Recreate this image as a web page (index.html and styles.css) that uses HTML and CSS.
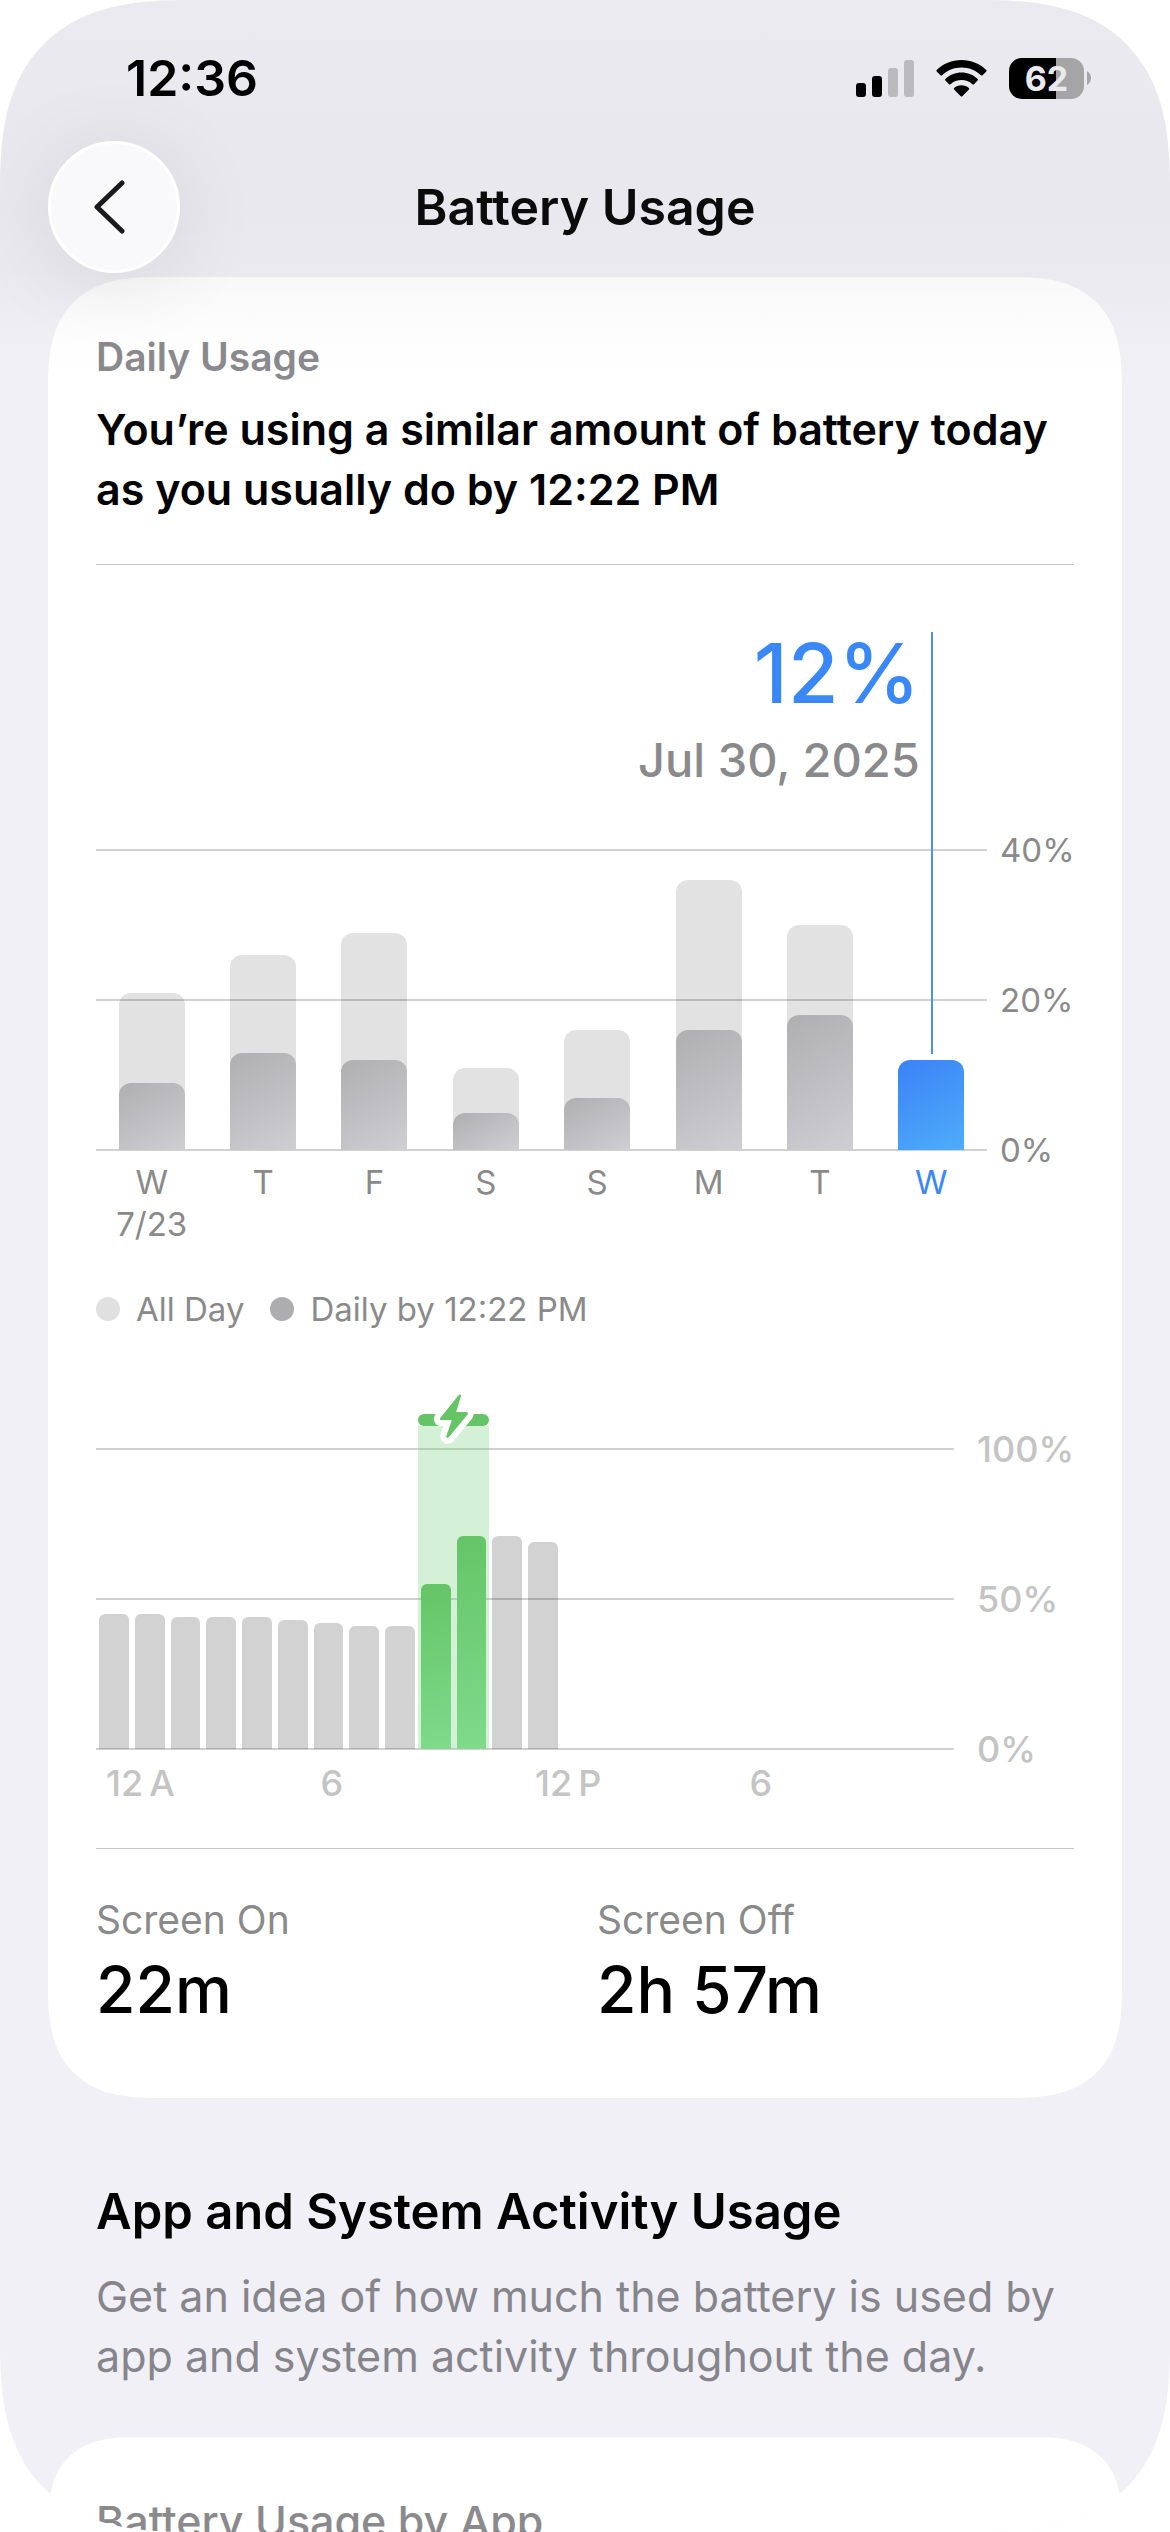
FILE: index.html
```html
<!DOCTYPE html>
<html lang="en">
<head>
<meta charset="utf-8">
<meta name="viewport" content="width=device-width, initial-scale=1">
<title>Battery Usage</title>
<link rel="stylesheet" href="styles.css">
</head>
<body>
<div class="screen">
  <div class="top">
    <div class="status-bar">
      <time class="clock">12:36</time>
      <div class="status-icons">
        <svg class="icon" width="58" height="37" viewBox="0 0 58 37" aria-hidden="true">
          <rect x="0" y="23" width="10" height="14" rx="3"/>
          <rect x="16" y="16" width="10" height="21" rx="3"/>
          <rect class="dim" x="32" y="8" width="10" height="29" rx="3"/>
          <rect class="dim" x="48" y="0" width="10" height="37" rx="3"/>
        </svg>
        <svg class="icon" width="51" height="37" viewBox="0 0 51 37" aria-hidden="true">
          <path d="M25.500 0C35 0 44 3.800 50.300 10Q51 10.800 50.300 11.600L46.600 15.200Q45.800 16 45 15.200C39.700 10.200 32.800 7.500 25.500 7.500S11.300 10.200 6 15.200Q5.200 16 4.400 15.200L.7 11.600Q0 10.800.7 10C7 3.800 16 0 25.500 0Z"/>
          <path d="M25.500 12.600C31.700 12.600 37.400 15 41.600 19Q42.400 19.800 41.600 20.600L38 24.200Q37.200 25 36.400 24.200C33.400 21.600 29.600 20.100 25.500 20.100S17.600 21.600 14.600 24.200Q13.800 25 13 24.200L9.400 20.600Q8.600 19.800 9.400 19C13.600 15 19.300 12.600 25.500 12.600Z"/>
          <path d="M25.500 25.200C28.300 25.200 30.900 26.200 32.900 27.900Q33.700 28.600 32.900 29.400L26.300 36.200Q25.500 37 24.700 36.200L18.100 29.400Q17.300 28.600 18.100 27.900C20.100 26.200 22.700 25.200 25.500 25.200Z"/>
        </svg>
        <div class="battery">
          <span class="battery-level">62</span>
          <svg width="4" height="14" viewBox="0 0 4 14" aria-hidden="true"><path d="M0 0Q4 2.500 4 7T0 14Z" fill="#a5a5a7"/></svg>
        </div>
      </div>
    </div>
    <header class="nav-bar">
      <button class="back" type="button" aria-label="Back">
        <svg width="31" height="54" viewBox="0 0 31 54" aria-hidden="true"><path d="M28 3L3 27L28 51" fill="none" stroke="#1a1a1c" stroke-width="5" stroke-linecap="round" stroke-linejoin="round"/></svg>
      </button>
      <h1 class="title">Battery Usage</h1>
    </header>
  </div>

  <main class="content">
    <section class="card">
      <h2 class="card-label">Daily Usage</h2>
      <p class="headline">You’re using a similar amount of battery today as you usually do by 12:22 PM</p>
      <hr class="rule rule-top">

      <div class="callout">
        <strong class="callout-value">12%</strong>
        <span class="callout-date">Jul 30, 2025</span>
      </div>
      <div class="chart daily">
        <div class="plot">
          <div class="gridlines"><i></i><i></i><i></i></div>
          <div class="days">
            <div class="day"><i class="all" style="height:52.5%"></i><i class="part" style="height:22.5%"></i></div>
            <div class="day"><i class="all" style="height:65%"></i><i class="part" style="height:32.5%"></i></div>
            <div class="day"><i class="all" style="height:72.5%"></i><i class="part" style="height:30%"></i></div>
            <div class="day"><i class="all" style="height:27.5%"></i><i class="part" style="height:12.5%"></i></div>
            <div class="day"><i class="all" style="height:40%"></i><i class="part" style="height:17.5%"></i></div>
            <div class="day"><i class="all" style="height:90%"></i><i class="part" style="height:40%"></i></div>
            <div class="day"><i class="all" style="height:75%"></i><i class="part" style="height:45%"></i></div>
            <div class="day selected"><i class="part" style="height:30%"></i></div>
          </div>
        </div>
        <div class="y-axis"><span>40%</span><span>20%</span><span>0%</span></div>
        <div class="day-names">
          <span>W<br>7/23</span><span>T</span><span>F</span><span>S</span><span>S</span><span>M</span><span>T</span><span class="current">W</span>
        </div>
      </div>

      <ul class="legend">
        <li><i class="dot"></i>All Day</li>
        <li><i class="dot dot-dark"></i>Daily by 12:22 PM</li>
      </ul>

      <div class="chart hourly">
        <div class="plot">
          <div class="gridlines"><i></i><i></i><i></i></div>
          <div class="hours">
            <div class="charging">
              <svg class="bolt" width="48" height="60" viewBox="0 0 48 60" aria-hidden="true">
                <path d="M28.600 8.200L10.200 31Q9.200 33 11 33H21.800L16.200 49.400Q17 51.600 18.600 50.600L37.600 27.400Q38.400 25.300 36.400 25.100H26.200L31 9Q30.600 6.600 28.600 8.200Z"/>
              </svg>
            </div>
            <i style="height:45%"></i><i style="height:45%"></i><i style="height:44%"></i><i style="height:44%"></i><i style="height:44%"></i><i style="height:43%"></i><i style="height:42%"></i><i style="height:41%"></i><i style="height:41%"></i><i class="on-charge" style="height:55%"></i><i class="on-charge" style="height:71%"></i><i style="height:71%"></i><i style="height:69%"></i>
          </div>
        </div>
        <div class="y-axis"><span>100%</span><span>50%</span><span>0%</span></div>
        <div class="hour-names"><span>12&#8201;A</span><span>6</span><span>12&#8201;P</span><span>6</span></div>
      </div>

      <hr class="rule rule-bottom">
      <dl class="totals">
        <div><dt>Screen On</dt><dd>22m</dd></div>
        <div><dt>Screen Off</dt><dd>2h 57m</dd></div>
      </dl>
    </section>

    <section class="intro">
      <h2 class="intro-title">App and System Activity Usage</h2>
      <p class="intro-text">Get an idea of how much the battery is used by app and system activity throughout the day.</p>
    </section>

    <section class="card apps">
      <h2 class="apps-label">Battery Usage by App</h2>
    </section>
  </main>
</div>
</body>
</html>
```
FILE: styles.css
```css
* { box-sizing: border-box; }

body {
  margin: 0;
  background: #fff;
  color: #000;
  font-family: Inter, "Liberation Sans", sans-serif;
}

h1, h2, p, ul, dl, dd, hr { margin: 0; padding: 0; }
i { display: block; font-style: normal; }

.screen {
  height: 100vh;
  overflow: hidden;
  border-radius: 148px;
  background: #f1f0f6;
  position: relative;
}

/* Status and navigation bars */
.top { position: relative; z-index: 1; }

.top::before {
  content: "";
  position: absolute;
  inset: 0 0 -110px;
  background: linear-gradient(rgba(0, 0, 0, .028) 0, rgba(0, 0, 0, .034) 50%, rgba(0, 0, 0, .026) 72%, rgba(0, 0, 0, .008) 88%, transparent);
  pointer-events: none;
}

.status-bar {
  position: relative;
  display: flex;
  align-items: center;
  justify-content: space-between;
  padding: 51px 79px 36px 126px;
}

.clock { font-size: 50px; line-height: 54px; font-weight: 600; }

.status-icons { display: flex; align-items: center; gap: 22px; }
.icon { display: block; fill: #000; }
.dim { fill: #bbbabf; }

.battery { display: flex; align-items: center; gap: 3px; }
.battery-level {
  width: 75px;
  border-radius: 13px;
  background: linear-gradient(to right, #000 63%, #a5a5a7 63%);
  color: #eae9ee;
  font-size: 34px;
  line-height: 41px;
  font-weight: 700;
  text-align: center;
}

.nav-bar {
  position: relative;
  display: grid;
  grid-template-columns: 132px 1fr 132px;
  align-items: center;
  padding: 0 48px;
}

.back {
  width: 132px;
  height: 132px;
  padding: 0 10px 0 0;
  display: flex;
  align-items: center;
  justify-content: center;
  border: 3px solid #fff;
  border-radius: 50%;
  background: #f9f9fb;
  box-shadow: 0 8px 90px rgba(0, 0, 0, .09);
}

.title {
  color: #0b0b0c;
  font-size: 50px;
  line-height: 60px;
  font-weight: 600;
  text-align: center;
}

.content { padding: 4px 48px 0; }

/* Cards */
.card {
  padding: 56px 48px 69px;
  border-radius: 84px;
  background: #fff;
}

.card-label { color: #8a8a8e; font-size: 39px; line-height: 48px; font-weight: 600; }
.headline { margin-top: 18px; font-size: 43px; line-height: 60px; font-weight: 600; }

.rule { height: 1px; border: 0; background: #c6c6c8; }
.rule-top { margin-top: 45px; }
.rule-bottom { margin-top: 44px; }

/* Charts */
.callout {
  display: flex;
  flex-direction: column;
  gap: 11px;
  align-items: flex-end;
  margin: 64px 87px 60px 0;
  padding-right: calc(6.25% + 6px);
}
.callout-value { color: #3a87f8; font-size: 82px; line-height: 90px; font-weight: 500; }
.callout-date { color: #8a8a8c; font-size: 47px; line-height: 60px; font-weight: 500; }

.chart { display: grid; }
.daily { grid-template-columns: 1fr 74px; column-gap: 13px; row-gap: 11px; }
.hourly { grid-template-columns: 1fr 97px; column-gap: 23px; row-gap: 13px; margin-top: 119px; }

.plot { display: grid; height: 300px; }
.plot > * { grid-area: 1 / 1; }

.gridlines {
  display: flex;
  flex-direction: column;
  justify-content: space-between;
  margin: -1px 0;
}
.gridlines i { height: 2px; background: #d1d1d1; }

.y-axis {
  display: flex;
  flex-direction: column;
  justify-content: space-between;
  margin: -21px 0;
  color: #8a8a8a;
  font-size: 33px;
  line-height: 42px;
}
.hourly .y-axis, .hour-names { color: #c4c4c4; font-size: 36px; font-weight: 500; }

.days, .day-names { display: grid; grid-template-columns: repeat(8, 1fr); }
.day { position: relative; display: grid; grid-template-rows: 100%; justify-items: center; align-items: end; }
.day i { grid-area: 1 / 1; width: 66px; border-radius: 12px 12px 0 0; }
.all { background: rgba(0, 0, 0, .115); }
.part { background: linear-gradient(150deg, #afafb1, #cfced3); }
.selected .part { background: linear-gradient(150deg, #3a82f7, #4fadf8); }
.selected::before {
  content: "";
  position: absolute;
  top: -218px;
  bottom: calc(30% + 6px);
  left: 50%;
  width: 2px;
  background: #4a90f6;
}

.day-names { color: #8a8a8a; font-size: 33px; line-height: 42px; text-align: center; }
.current { color: #3a87f8; }

.legend {
  display: flex;
  gap: 26px;
  margin-top: 43px;
  color: #8a8a8a;
  font-size: 33px;
  line-height: 42px;
  list-style: none;
}
.legend li { display: flex; align-items: center; gap: 16px; }
.dot { width: 24px; height: 24px; border-radius: 50%; background: #e0e0e0; }
.dot-dark { background: #adadaf; }

.hours {
  position: relative;
  display: grid;
  grid-template-columns: repeat(24, 1fr);
  grid-template-rows: 100%;
  align-items: end;
}
.hours > i {
  position: relative;
  grid-row: 1;
  margin: 0 3px;
  border-radius: 6px 6px 0 0;
  background: rgba(0, 0, 0, .176);
}
.hours > .on-charge { background: linear-gradient(170deg, #65c466, #7fda8b); }

.charging {
  position: absolute;
  inset: -35px calc(100% * 13 / 24) 0 calc(100% * 9 / 24);
  border-top: 12px solid transparent;
  background: rgba(101, 204, 112, .28) padding-box;
}
.charging::before {
  content: "";
  position: absolute;
  inset: -12px 0 auto;
  height: 12px;
  border-radius: 6px;
  background: #65c466;
}
.bolt { position: absolute; top: -39px; left: calc(50% - 24px); overflow: visible; }
.bolt path { fill: #65c466; stroke: #fff; stroke-width: 12px; stroke-linejoin: round; paint-order: stroke; }

.hour-names { display: grid; grid-template-columns: repeat(4, 1fr); padding-left: 10px; margin-right: -10px; line-height: 42px; }

/* Totals */
.totals {
  display: grid;
  grid-template-columns: 1fr 1fr;
  gap: 24px;
  margin-top: 47px;
}
.totals dt { color: #8a8a8a; font-size: 39px; line-height: 48px; }
.totals dd { margin-top: 7px; font-size: 64px; line-height: 78px; font-weight: 500; }

/* App list */
.intro { padding: 84px 48px 51px; }
.intro-title { font-size: 49px; line-height: 60px; font-weight: 600; }
.intro-text { margin-top: 24px; color: #85858b; font-size: 43px; line-height: 60px; }
.apps-label { padding-top: 4px; color: #8a8a8c; font-size: 43px; line-height: 48px; font-weight: 500; }

/* Smoother corners where the browser can draw them */
@supports (corner-shape: superellipse(1.4)) {
  .screen { border-radius: 190px; corner-shape: superellipse(1.4); }
  .card { border-radius: 110px; corner-shape: superellipse(1.4); }
}
```
